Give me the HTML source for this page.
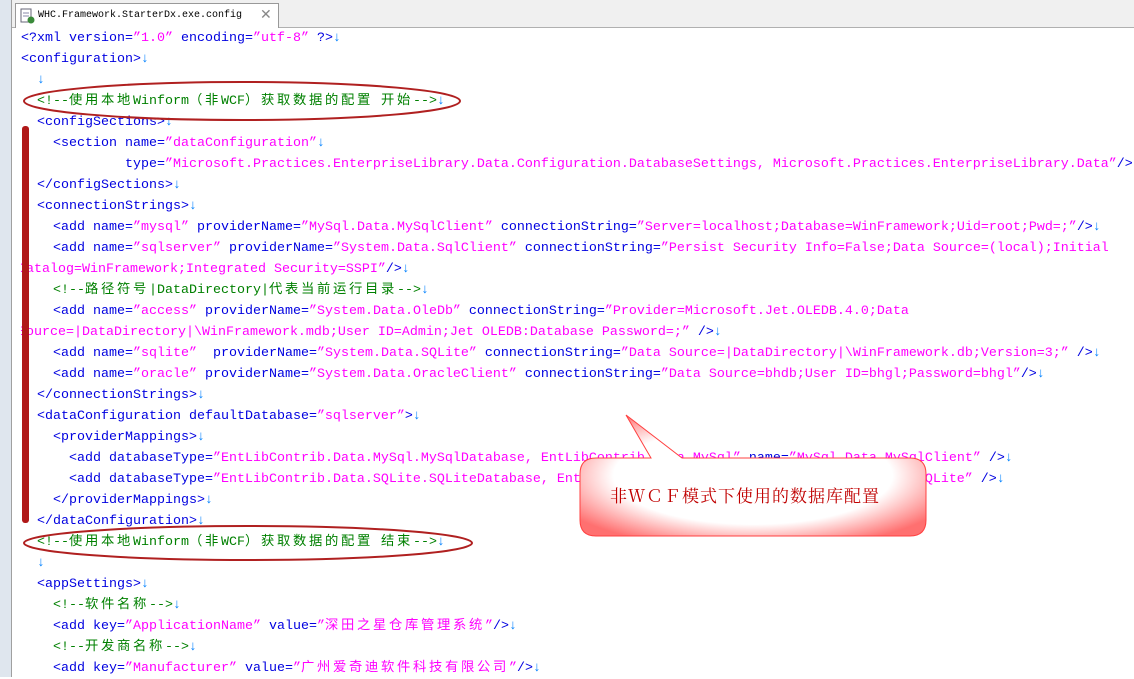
<!DOCTYPE html>
<html><head><meta charset="utf-8"><style>
*{margin:0;padding:0}
body{width:1134px;height:677px;overflow:hidden;background:#fff;position:relative;font-family:"Liberation Mono","Noto Sans CJK SC",monospace}
.side{position:absolute;left:0;top:0;width:11px;height:677px;background:#dfe6ee;border-right:1px solid #a0a0a0}
.tabbar{position:absolute;left:12px;top:0;width:1122px;height:27px;background:#f0f0f0;border-bottom:1px solid #b0b0b0}
.tab{position:absolute;left:3px;top:3px;width:262px;height:24px;background:#fff;border:1px solid #999;border-bottom:none;font-size:10px;line-height:24px}
.tab span{position:absolute;left:22px;top:0;color:#000}
.tab i{position:absolute;left:244px;top:0;color:#888;font-style:normal;font-size:14px}
.code{position:absolute;left:21px;top:28px;width:1113px;font-size:13.33px;line-height:21px;overflow:hidden}
.code div{height:21px;overflow:hidden;white-space:pre}
.t{color:#0000e0}.v{color:#f0f}.m{color:#008000}.r{color:#0080ff}
.c{letter-spacing:2.67px}
</style></head><body>
<div class="side"></div>
<div class="tabbar"><div class="tab">
<svg style="position:absolute;left:4px;top:4px" width="15" height="16"><rect x="1" y="1" width="10" height="13" fill="#fff" stroke="#667"/><line x1="3" y1="5" x2="9" y2="5" stroke="#88a"/><line x1="3" y1="8" x2="9" y2="8" stroke="#88a"/><circle cx="11" cy="12" r="3.5" fill="#3a8a3a"/></svg>
<span>WHC.Framework.StarterDx.exe.config</span><i>✕</i></div></div>
<div class="code"><div><span class="t">&lt;?xml version=</span><span class="v">”1.0”</span><span class="t"> encoding=</span><span class="v">”utf-8”</span><span class="t"> ?&gt;</span><span class="r">↓</span></div><div><span class="t">&lt;configuration&gt;</span><span class="r">↓</span></div><div>  <span class="r">↓</span></div><div>  <span class="m">&lt;!--<span class="c">使用本地</span>Winform<span class="c">（非</span>WCF<span class="c">）获取数据的配置</span> <span class="c">开始</span>--&gt;</span><span class="r">↓</span></div><div>  <span class="t">&lt;configSections&gt;</span><span class="r">↓</span></div><div>    <span class="t">&lt;section name=</span><span class="v">”dataConfiguration”</span><span class="r">↓</span></div><div>             <span class="t">type=</span><span class="v">”Microsoft.Practices.EnterpriseLibrary.Data.Configuration.DatabaseSettings, Microsoft.Practices.EnterpriseLibrary.Data”</span><span class="t">/&gt;</span><span class="r">↓</span></div><div>  <span class="t">&lt;/configSections&gt;</span><span class="r">↓</span></div><div>  <span class="t">&lt;connectionStrings&gt;</span><span class="r">↓</span></div><div>    <span class="t">&lt;add name=</span><span class="v">”mysql”</span><span class="t"> providerName=</span><span class="v">”MySql.Data.MySqlClient”</span><span class="t"> connectionString=</span><span class="v">”Server=localhost;Database=WinFramework;Uid=root;Pwd=;”</span><span class="t">/&gt;</span><span class="r">↓</span></div><div>    <span class="t">&lt;add name=</span><span class="v">”sqlserver”</span><span class="t"> providerName=</span><span class="v">”System.Data.SqlClient”</span><span class="t"> connectionString=</span><span class="v">”Persist Security Info=False;Data Source=(local);Initial</span></div><div style="margin-left:-3px"><span class="v">Catalog=WinFramework;Integrated Security=SSPI”</span><span class="t">/&gt;</span><span class="r">↓</span></div><div>    <span class="m">&lt;!--<span class="c">路径符号</span>|DataDirectory|<span class="c">代表当前运行目录</span>--&gt;</span><span class="r">↓</span></div><div>    <span class="t">&lt;add name=</span><span class="v">”access”</span><span class="t"> providerName=</span><span class="v">”System.Data.OleDb”</span><span class="t"> connectionString=</span><span class="v">”Provider=Microsoft.Jet.OLEDB.4.0;Data</span></div><div style="margin-left:-3px"><span class="v">Source=|DataDirectory|\WinFramework.mdb;User ID=Admin;Jet OLEDB:Database Password=;”</span><span class="t"> /&gt;</span><span class="r">↓</span></div><div>    <span class="t">&lt;add name=</span><span class="v">”sqlite”</span><span class="t">  providerName=</span><span class="v">”System.Data.SQLite”</span><span class="t"> connectionString=</span><span class="v">”Data Source=|DataDirectory|\WinFramework.db;Version=3;”</span><span class="t"> /&gt;</span><span class="r">↓</span></div><div>    <span class="t">&lt;add name=</span><span class="v">”oracle”</span><span class="t"> providerName=</span><span class="v">”System.Data.OracleClient”</span><span class="t"> connectionString=</span><span class="v">”Data Source=bhdb;User ID=bhgl;Password=bhgl”</span><span class="t">/&gt;</span><span class="r">↓</span></div><div>  <span class="t">&lt;/connectionStrings&gt;</span><span class="r">↓</span></div><div>  <span class="t">&lt;dataConfiguration defaultDatabase=</span><span class="v">”sqlserver”</span><span class="t">&gt;</span><span class="r">↓</span></div><div>    <span class="t">&lt;providerMappings&gt;</span><span class="r">↓</span></div><div>      <span class="t">&lt;add databaseType=</span><span class="v">”EntLibContrib.Data.MySql.MySqlDatabase, EntLibContrib.Data.MySql”</span><span class="t"> name=</span><span class="v">”MySql.Data.MySqlClient”</span><span class="t"> /&gt;</span><span class="r">↓</span></div><div>      <span class="t">&lt;add databaseType=</span><span class="v">”EntLibContrib.Data.SQLite.SQLiteDatabase, EntLibContrib.Data.SqLite”</span><span class="t"> name=</span><span class="v">”System.Data.SQLite”</span><span class="t"> /&gt;</span><span class="r">↓</span></div><div>    <span class="t">&lt;/providerMappings&gt;</span><span class="r">↓</span></div><div>  <span class="t">&lt;/dataConfiguration&gt;</span><span class="r">↓</span></div><div>  <span class="m">&lt;!--<span class="c">使用本地</span>Winform<span class="c">（非</span>WCF<span class="c">）获取数据的配置</span> <span class="c">结束</span>--&gt;</span><span class="r">↓</span></div><div>  <span class="r">↓</span></div><div>  <span class="t">&lt;appSettings&gt;</span><span class="r">↓</span></div><div>    <span class="m">&lt;!--<span class="c">软件名称</span>--&gt;</span><span class="r">↓</span></div><div>    <span class="t">&lt;add key=</span><span class="v">”ApplicationName”</span><span class="t"> value=</span><span class="v">”<span class="c">深田之星仓库管理系统</span>”</span><span class="t">/&gt;</span><span class="r">↓</span></div><div>    <span class="m">&lt;!--<span class="c">开发商名称</span>--&gt;</span><span class="r">↓</span></div><div>    <span class="t">&lt;add key=</span><span class="v">”Manufacturer”</span><span class="t"> value=</span><span class="v">”<span class="c">广州爱奇迪软件科技有限公司</span>”</span><span class="t">/&gt;</span><span class="r">↓</span></div></div>
<svg style="position:absolute;left:0;top:0" width="1134" height="677">
<defs><radialGradient id="g" cx="50%" cy="50%" r="62%"><stop offset="65%" stop-color="#fff"/><stop offset="100%" stop-color="#ff7070"/></radialGradient></defs>
<ellipse cx="242" cy="101" rx="218" ry="19" fill="none" stroke="#b02020" stroke-width="2"/>
<ellipse cx="248" cy="543" rx="224" ry="17" fill="none" stroke="#b02020" stroke-width="2"/>
<rect x="22" y="126" width="7" height="397" rx="3" fill="#b01818"/>
<path d="M626 415 L682 458 L910 458 Q926 458 926 474 L926 520 Q926 536 910 536 L596 536 Q580 536 580 520 L580 474 Q580 458 596 458 L651 458 Z" fill="url(#g)" stroke="#ff4040" stroke-width="1"/>
<text x="610" y="502" font-family="Liberation Serif,'Noto Serif CJK SC',serif" font-size="17" fill="#c00000" letter-spacing="1">非ＷＣＦ模式下使用的数据库配置</text>
</svg>
</body></html>
